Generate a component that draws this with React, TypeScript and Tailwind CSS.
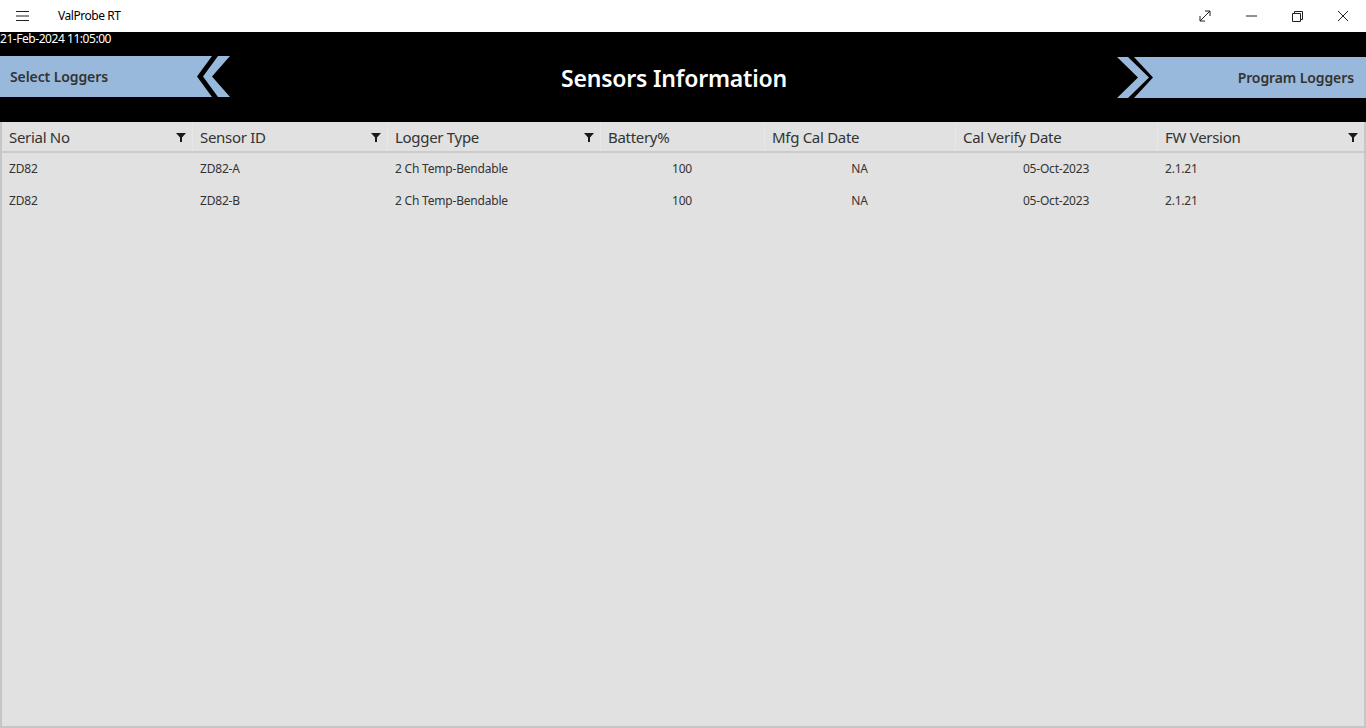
import React from "react";

const font = { fontFamily: '"Noto Sans", "Open Sans", sans-serif' };

type Col = { label: string; width: string; filter?: boolean; align: "left" | "center" };

const cols: Col[] = [
  { label: "Serial No", width: "w-[190px]", filter: true, align: "left" },
  { label: "Sensor ID", width: "w-[195px]", filter: true, align: "left" },
  { label: "Logger Type", width: "w-[213px]", filter: true, align: "left" },
  { label: "Battery%", width: "w-[164px]", align: "center" },
  { label: "Mfg Cal Date", width: "w-[191px]", align: "center" },
  { label: "Cal Verify Date", width: "w-[202px]", align: "center" },
  { label: "FW Version", width: "flex-1", filter: true, align: "left" },
];

const rows = [
  ["ZD82", "ZD82-A", "2 Ch Temp-Bendable", "100", "NA", "05-Oct-2023", "2.1.21"],
  ["ZD82", "ZD82-B", "2 Ch Temp-Bendable", "100", "NA", "05-Oct-2023", "2.1.21"],
];

function Funnel() {
  return (
    <svg width="10" height="9" viewBox="0 0 10 9" className="shrink-0">
      <path d="M0 0h10L6 4.5V9H4V4.5z" fill="#1a1a1a" />
    </svg>
  );
}

function TitleBar() {
  return (
    <div className="flex h-8 items-center bg-white text-[12px] text-black">
      <div className="flex w-[58px] justify-center pr-[12px]">
        <svg width="14" height="10" viewBox="0 0 14 10">
          <path d="M0 0.5h13M0 5h13M0 9.5h13" stroke="#222" strokeWidth="1" />
        </svg>
      </div>
      <span className="tracking-[-0.45px]">ValProbe RT</span>
      <div className="ml-auto flex h-full">
        <div className="flex w-[46px] items-center justify-center">
          <svg width="12" height="12" viewBox="0 0 12 12" fill="none" stroke="#222" strokeWidth="1">
            <path d="M1 11L11 1M6 1h5v5M1 6v5h5" />
          </svg>
        </div>
        <div className="flex w-[46px] items-center justify-center">
          <svg width="11" height="2" viewBox="0 0 11 2">
            <path d="M0 1h11" stroke="#222" strokeWidth="1" />
          </svg>
        </div>
        <div className="flex w-[46px] items-center justify-center">
          <svg width="11" height="11" viewBox="0 0 11 11" fill="none" stroke="#222" strokeWidth="1">
            <path d="M0.5 2.5h8v8h-8z M2.5 2.5v-2h8v8h-2" />
          </svg>
        </div>
        <div className="flex w-[46px] items-center justify-center">
          <svg width="12" height="12" viewBox="0 0 12 12">
            <path d="M1 1l10 10M11 1L1 11" stroke="#222" strokeWidth="1" />
          </svg>
        </div>
      </div>
    </div>
  );
}

function Header() {
  return (
    <div className="h-[90px] bg-black">
      <div className="h-[15px] text-[12px] leading-[14px] text-white tracking-[-0.45px]">21-Feb-2024 11:05:00</div>
      <div className="mt-[9px] flex items-start">
        <div className="flex items-start">
          <div className="flex h-[41px] w-[197px] items-center bg-[#98b9dc] pl-[10px] text-[14px] font-semibold tracking-[-0.1px] text-[#333]">
            Select Loggers
          </div>
          <svg width="34" height="41" viewBox="0 0 34 41">
            <polygon points="0,0 15,0 0,20.5 15,41 0,41" fill="#98b9dc" />
            <polygon points="21,0 33,0 15,20.5 33,41 21,41 6,20.5" fill="#98b9dc" />
          </svg>
        </div>
        <div className="flex-1 pt-[7px] text-center text-[23px] font-semibold leading-[30px] tracking-[-0.2px] text-white">
          Sensors Information
        </div>
        <div className="mt-px flex items-start">
          <svg width="36" height="41" viewBox="0 0 36 41">
            <polygon points="0,0 11,0 32,20.5 11,41 0,41 21,20.5" fill="#98b9dc" />
            <polygon points="17,0 36,0 36,41 17,41 36,20.5" fill="#98b9dc" />
          </svg>
          <div className="flex h-[41px] w-[213px] items-center justify-end bg-[#98b9dc] pr-[12px] text-[14px] font-semibold tracking-[-0.1px] text-[#333]">
            Program Loggers
          </div>
        </div>
      </div>
    </div>
  );
}

function Table() {
  return (
    <div className="flex h-[606px] flex-col border-b-2 border-l-2 border-r-2 border-[#c6c6c6] bg-[#e0e1e0] text-[#333]">
      <div className="flex h-[31px] border-b-2 border-[#cbcbcb]">
        {cols.map((c, i) => (
          <div
            key={c.label}
            className={`${c.width} flex items-center pl-[7px] pr-[6px] pt-[2px] text-[15px] ${i > 0 ? "border-l border-[#e6e7e6]" : ""}`}
          >
            <span className="flex-1 truncate tracking-[-0.3px]">{c.label}</span>
            {c.filter && <Funnel />}
          </div>
        ))}
      </div>
      {rows.map((r, ri) => (
        <div key={ri} className="flex h-[32px] items-center text-[12px] tracking-[-0.2px]">
          {r.map((v, i) => {
            const c = cols[i];
            return (
              <div
                key={i}
                className={`${c.width} ${c.align === "center" ? "text-center" : i > 0 ? "pl-[8px] text-left" : "pl-[7px] text-left"}`}
              >
                {v}
              </div>
            );
          })}
        </div>
      ))}
    </div>
  );
}

export default function App() {
  return (
    <div className="h-[728px] w-[1366px] overflow-hidden bg-[#e0e1e0]" style={font}>
      <TitleBar />
      <Header />
      <Table />
    </div>
  );
}
